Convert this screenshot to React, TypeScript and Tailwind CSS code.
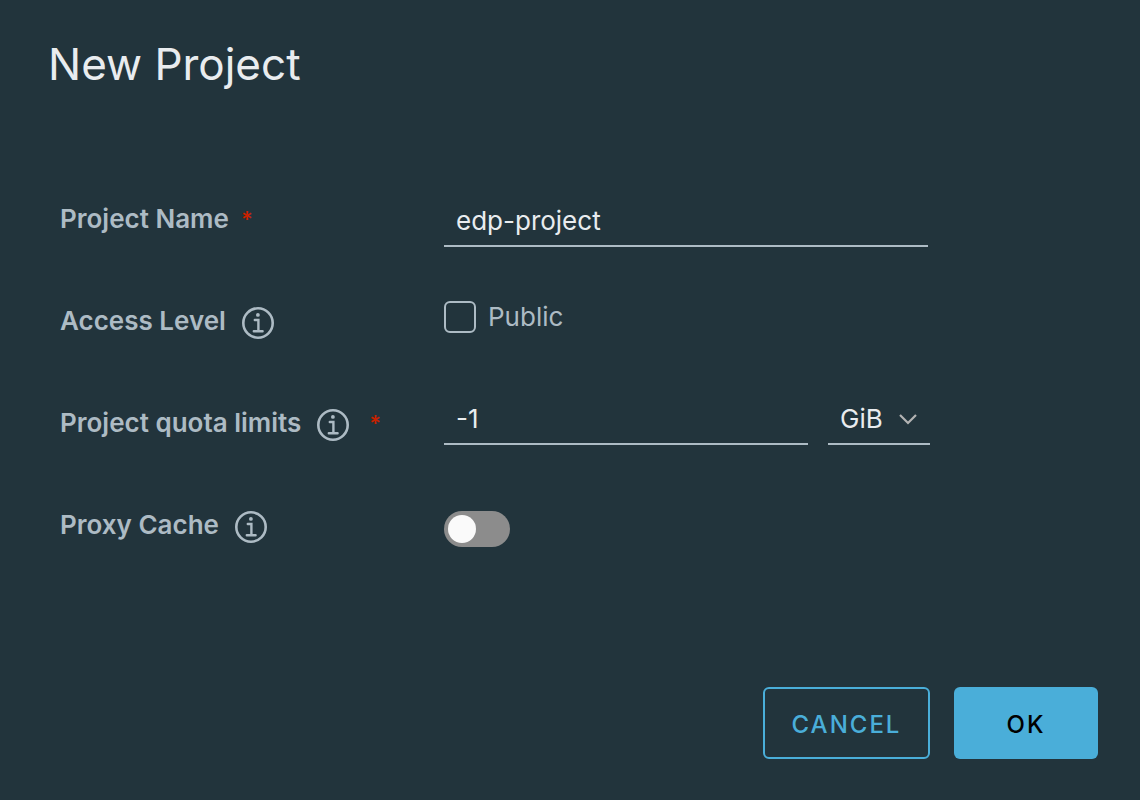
import { useState } from "react";

function InfoButton({ label }: { label: string }) {
  return (
    <button type="button" aria-label={label} className="ml-4 mt-1 size-8 shrink-0 text-[#adbbc4]">
      <svg viewBox="0 0 32 32" className="size-8" fill="none" stroke="currentColor" strokeWidth="2.6">
        <circle cx="16" cy="16" r="14.7" />
        <circle cx="15.9" cy="7.9" r="1.9" fill="currentColor" stroke="none" />
        <path d="M12.8 13h3.6v11.2M11.8 24.3h8.8" strokeWidth="2.4" strokeLinecap="round" />
      </svg>
    </button>
  );
}

const row = "flex min-h-[102px] items-center";
const labelCell = "flex w-96 shrink-0 items-center pb-1 text-[26px] leading-8 font-semibold text-[#adbbc4]";
const required = "text-[22px] text-[#c92100]";
const field =
  "h-[52px] min-w-0 border-b-2 border-[#adbbc4] bg-transparent px-3 text-[26px] leading-8 text-[#e9ecef] outline-none";

export default function App() {
  const [name, setName] = useState("edp-project");
  const [isPublic, setIsPublic] = useState(false);
  const [quota, setQuota] = useState("-1");
  const [proxy, setProxy] = useState(false);

  return (
    <main className="flex min-h-screen flex-col bg-[#22343c] font-['Inter',sans-serif] text-[#e9ecef]">
      <h1 className="px-12 pt-9 text-[44px] leading-14 font-normal">New Project</h1>
      <form className="flex grow flex-col" onSubmit={(e) => e.preventDefault()}>
        <div className="px-15 pt-[78px]">
          <div className={row}>
            <div className={labelCell}>
              <label htmlFor="name">Project Name</label>
              <span className={`${required} ml-3`}>*</span>
            </div>
            <input
              id="name"
              className={`${field} w-[484px]`}
              value={name}
              onChange={(e) => setName(e.target.value)}
            />
          </div>

          <div className={row}>
            <div className={labelCell}>
              <span>Access Level</span>
              <InfoButton label="About access level" />
            </div>
            <label className="flex items-center gap-3 pb-3 text-[26px] leading-8 text-[#adbbc4]">
              <input
                type="checkbox"
                className="size-8 appearance-none rounded-md border-2 border-[#adbbc4] checked:bg-[#4aaed9]"
                checked={isPublic}
                onChange={(e) => setIsPublic(e.target.checked)}
              />
              Public
            </label>
          </div>

          <div className={row}>
            <div className={labelCell}>
              <label htmlFor="quota">Project quota limits</label>
              <InfoButton label="About quota limits" />
              <span className={`${required} ml-5`}>*</span>
            </div>
            <div className="flex min-w-0 gap-5 pb-3">
              <input
                id="quota"
                className={`${field} w-[364px]`}
                value={quota}
                onChange={(e) => setQuota(e.target.value)}
              />
              <div className="relative shrink-0">
                <select
                  aria-label="Quota unit"
                  className={`${field} w-[102px] appearance-none pt-0.5`}
                  defaultValue="GiB"
                >
                  <option>MiB</option>
                  <option>GiB</option>
                  <option>TiB</option>
                </select>
                <svg
                  viewBox="0 0 20 12"
                  className="pointer-events-none absolute top-5 right-3 h-3 w-5"
                  fill="none"
                  stroke="#b3b3b3"
                  strokeWidth="2.2"
                >
                  <path d="M2 2l8 8 8-8" />
                </svg>
              </div>
            </div>
          </div>

          <div className={row}>
            <div className={labelCell}>
              <label htmlFor="proxy">Proxy Cache</label>
              <InfoButton label="About proxy cache" />
            </div>
            <input
              id="proxy"
              type="checkbox"
              role="switch"
              className="mt-1 h-9 w-[66px] appearance-none rounded-full bg-[#8c8c8c] p-1 before:block before:size-7 before:rounded-full before:bg-[#fafafa] checked:bg-[#4aaed9] checked:before:ml-auto"
              checked={proxy}
              onChange={(e) => setProxy(e.target.checked)}
            />
          </div>
        </div>

        <div className="mt-auto flex justify-end gap-6 pr-[42px] pb-[41px] text-2xl font-medium tracking-[2px]">
          <button type="button" className="h-18 w-[167px] rounded-md border-2 border-[#4aaed9] pt-1 text-[#4aaed9]">
            CANCEL
          </button>
          <button type="submit" className="h-18 w-36 rounded-md bg-[#4aaed9] pt-1 text-black">
            OK
          </button>
        </div>
      </form>
    </main>
  );
}
